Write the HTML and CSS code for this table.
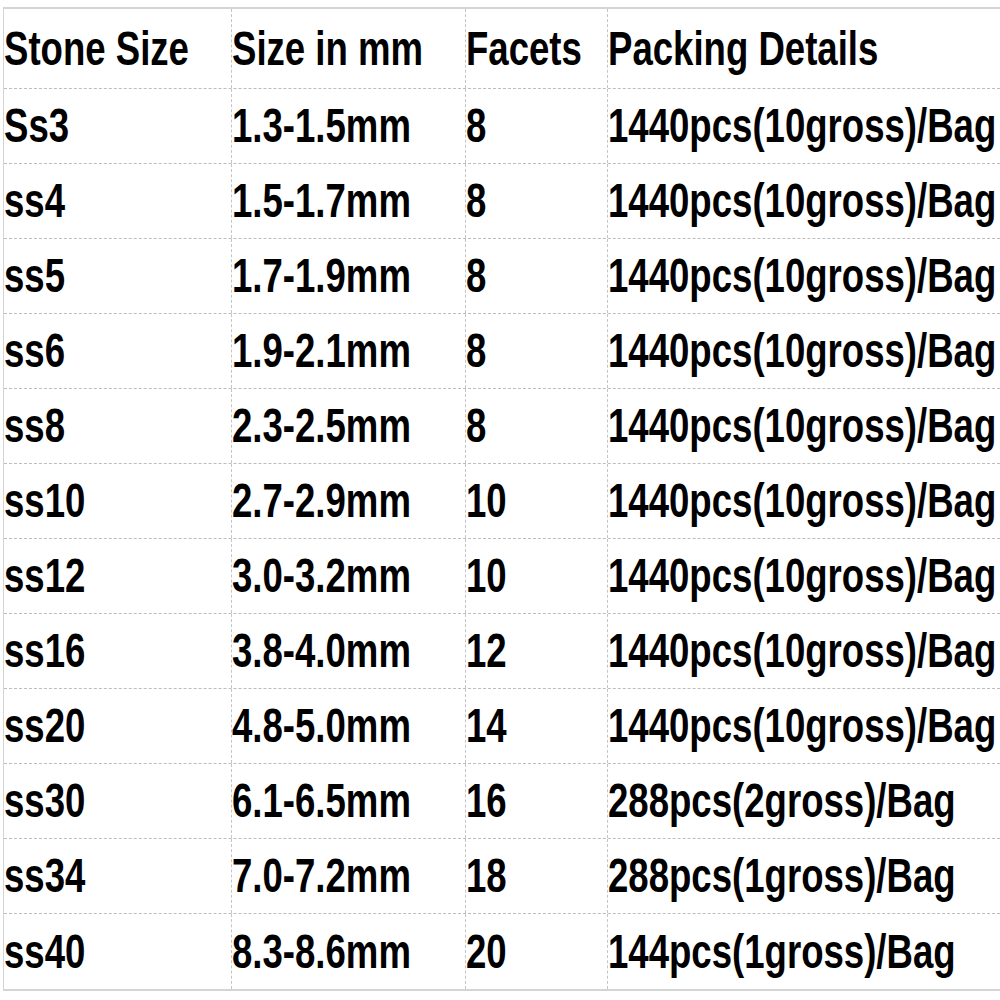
FILE: index.html
```html
<!DOCTYPE html>
<html>
<head>
<meta charset="utf-8">
<link rel="stylesheet" href="styles.css">
</head>
<body>
<div class="sheet">
  <div class="row head">
    <div class="cell"><span class="t">Stone Size</span></div>
    <div class="cell"><span class="t">Size in mm</span></div>
    <div class="cell"><span class="t">Facets</span></div>
    <div class="cell"><span class="t">Packing Details</span></div>
  </div>
  <div class="row"><div class="cell"><span class="t">Ss3</span></div><div class="cell"><span class="t">1.3-1.5mm</span></div><div class="cell"><span class="t">8</span></div><div class="cell"><span class="t">1440pcs(10gross)/Bag</span></div></div>
  <div class="row"><div class="cell"><span class="t">ss4</span></div><div class="cell"><span class="t">1.5-1.7mm</span></div><div class="cell"><span class="t">8</span></div><div class="cell"><span class="t">1440pcs(10gross)/Bag</span></div></div>
  <div class="row"><div class="cell"><span class="t">ss5</span></div><div class="cell"><span class="t">1.7-1.9mm</span></div><div class="cell"><span class="t">8</span></div><div class="cell"><span class="t">1440pcs(10gross)/Bag</span></div></div>
  <div class="row"><div class="cell"><span class="t">ss6</span></div><div class="cell"><span class="t">1.9-2.1mm</span></div><div class="cell"><span class="t">8</span></div><div class="cell"><span class="t">1440pcs(10gross)/Bag</span></div></div>
  <div class="row"><div class="cell"><span class="t">ss8</span></div><div class="cell"><span class="t">2.3-2.5mm</span></div><div class="cell"><span class="t">8</span></div><div class="cell"><span class="t">1440pcs(10gross)/Bag</span></div></div>
  <div class="row"><div class="cell"><span class="t">ss10</span></div><div class="cell"><span class="t">2.7-2.9mm</span></div><div class="cell"><span class="t">10</span></div><div class="cell"><span class="t">1440pcs(10gross)/Bag</span></div></div>
  <div class="row"><div class="cell"><span class="t">ss12</span></div><div class="cell"><span class="t">3.0-3.2mm</span></div><div class="cell"><span class="t">10</span></div><div class="cell"><span class="t">1440pcs(10gross)/Bag</span></div></div>
  <div class="row"><div class="cell"><span class="t">ss16</span></div><div class="cell"><span class="t">3.8-4.0mm</span></div><div class="cell"><span class="t">12</span></div><div class="cell"><span class="t">1440pcs(10gross)/Bag</span></div></div>
  <div class="row"><div class="cell"><span class="t">ss20</span></div><div class="cell"><span class="t">4.8-5.0mm</span></div><div class="cell"><span class="t">14</span></div><div class="cell"><span class="t">1440pcs(10gross)/Bag</span></div></div>
  <div class="row"><div class="cell"><span class="t">ss30</span></div><div class="cell"><span class="t">6.1-6.5mm</span></div><div class="cell"><span class="t">16</span></div><div class="cell"><span class="t">288pcs(2gross)/Bag</span></div></div>
  <div class="row"><div class="cell"><span class="t">ss34</span></div><div class="cell"><span class="t">7.0-7.2mm</span></div><div class="cell"><span class="t">18</span></div><div class="cell"><span class="t">288pcs(1gross)/Bag</span></div></div>
  <div class="row last"><div class="cell"><span class="t">ss40</span></div><div class="cell"><span class="t">8.3-8.6mm</span></div><div class="cell"><span class="t">20</span></div><div class="cell"><span class="t">144pcs(1gross)/Bag</span></div></div>
</div>
</body>
</html>
```
FILE: styles.css
```css
html, body {
  margin: 0;
  padding: 0;
  background: #fff;
  overflow: hidden;
}
.sheet {
  margin: 7px 0 0 3px;
  border-top: 2px solid #d4d4d4;
  border-left: 1px solid #d4d4d4;
  border-bottom: 2px solid #d4d4d4;
  font-family: "Liberation Sans", Arial, sans-serif;
  font-weight: bold;
  color: #000;
}
.row {
  display: grid;
  grid-template-columns: 227px 234px 142px minmax(0, 1fr);
  height: 75px;
  box-sizing: border-box;
  border-bottom: 1px dashed #bdbdbd;
}
.row.head {
  height: 80px;
}
.row.last {
  border-bottom: none;
}
.cell {
  display: flex;
  align-items: center;
  min-width: 0;
  padding-left: 0;
  box-sizing: border-box;
  border-left: 1px dashed #c4c4c4;
  overflow: visible;
}
.cell:first-child {
  border-left: none;
}
.t {
  display: inline-block;
  font-size: 48px;
  line-height: 1;
  white-space: nowrap;
  transform: scaleX(0.762);
  transform-origin: 0 50%;
}
```
